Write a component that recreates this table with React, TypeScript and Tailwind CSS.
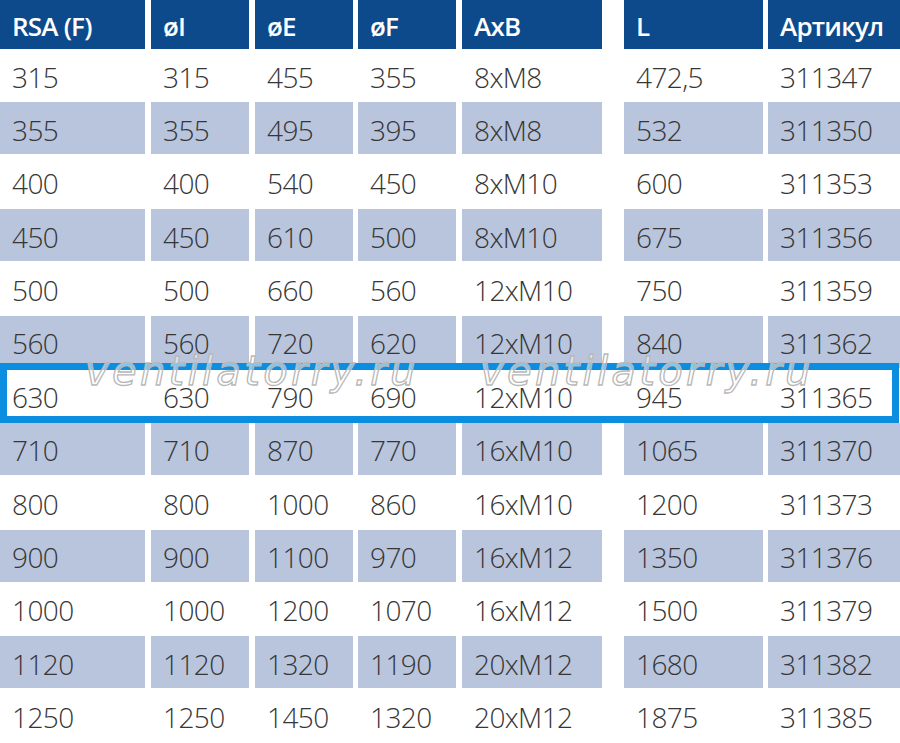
const HEAD = ['RSA (F)', 'øI', 'øE', 'øF', 'AxB', 'L', 'Артикул'];

const ROWS = [
  ['315', '315', '455', '355', '8xM8', '472,5', '311347'],
  ['355', '355', '495', '395', '8xM8', '532', '311350'],
  ['400', '400', '540', '450', '8xM10', '600', '311353'],
  ['450', '450', '610', '500', '8xM10', '675', '311356'],
  ['500', '500', '660', '560', '12xM10', '750', '311359'],
  ['560', '560', '720', '620', '12xM10', '840', '311362'],
  ['630', '630', '790', '690', '12xM10', '945', '311365'],
  ['710', '710', '870', '770', '16xM10', '1065', '311370'],
  ['800', '800', '1000', '860', '16xM10', '1200', '311373'],
  ['900', '900', '1100', '970', '16xM12', '1350', '311376'],
  ['1000', '1000', '1200', '1070', '16xM12', '1500', '311379'],
  ['1120', '1120', '1320', '1190', '20xM12', '1680', '311382'],
  ['1250', '1250', '1450', '1320', '20xM12', '1875', '311385'],
];

// column widths + the uneven gaps between them
const COL = [
  'w-[145px]',
  'ml-[6px] w-[98px]',
  'ml-[6px] w-[98px]',
  'ml-[5px] w-[98px]',
  'ml-[6px] w-[140px]',
  'ml-[22px] w-[139px]',
  'ml-[5px] flex-1',
];

const HIGHLIGHT = 6;

function Watermark({ className }: { className: string }) {
  return (
    <span
      className={`pointer-events-none absolute select-none whitespace-nowrap font-['DejaVu_Sans',sans-serif] text-[40px] italic leading-none tracking-[3.3px] text-white/50 [-webkit-text-stroke:1.3px_#b8b8b8] ${className}`}
    >
      ventilatorry.ru
    </span>
  );
}

export default function App() {
  return (
    <div className="h-[743px] w-[900px] overflow-hidden bg-white font-['Open_Sans',sans-serif]">
      {/* Header */}
      <div className="flex h-[49px]">
        {HEAD.map((h, i) => (
          <div
            key={h}
            className={`${COL[i]} flex items-center bg-[#0d4a8c] px-[12px] pt-[3px] text-[26px] font-semibold leading-none tracking-[-0.8px] text-white`}
          >
            {h}
          </div>
        ))}
      </div>

      {/* Body */}
      {ROWS.map((r, ri) => (
        <div key={r[0]} className="relative flex h-[53.4px] pb-[1.4px]">
          {r.map((c, ci) => (
            <div
              key={ci}
              className={`${COL[ci]} flex items-center px-[12px] pt-[3px] text-[28px] font-light leading-none tracking-[-0.6px] text-[#363636] ${
                ri % 2 === 1 ? 'bg-[#b9c5dd]' : ''
              }`}
            >
              {c}
            </div>
          ))}
          {ri === HIGHLIGHT && (
            <>
              <div className="pointer-events-none absolute -top-[6px] bottom-0 left-0 w-[899px] border-[7px] border-[#0b8de0]" />
              <Watermark className="-top-[18px] left-[85px]" />
              <Watermark className="-top-[18px] left-[480px]" />
            </>
          )}
        </div>
      ))}
    </div>
  );
}
